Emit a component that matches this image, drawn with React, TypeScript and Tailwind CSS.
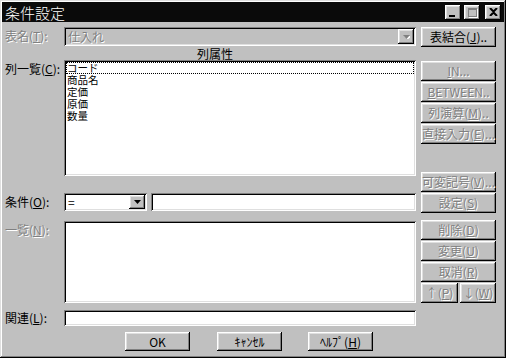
const raised =
  'shadow-[inset_-1px_-1px_0_#000,inset_1px_1px_0_#fff,inset_-2px_-2px_0_#808080,inset_2px_2px_0_#dfdfdf]'
const sunken =
  'shadow-[inset_1px_1px_0_#808080,inset_-1px_-1px_0_#fff,inset_2px_2px_0_#000,inset_-2px_-2px_0_#dfdfdf]'
const disabledText = 'text-[#808080] [text-shadow:1px_1px_0_#fff]'

function Btn(props: { label: React.ReactNode; disabled?: boolean; className?: string }) {
  const { label, disabled, className } = props
  return (
    <div
      className={`flex items-center justify-center bg-[#c0c0c0] ${raised} ${
        disabled ? disabledText : 'text-black'
      } ${className ?? 'h-[20px] w-[75px]'}`}
    >
      {label}
    </div>
  )
}

function Arrow({ disabled }: { disabled?: boolean }) {
  return (
    <div className={`flex h-full w-[16px] items-center justify-center bg-[#c0c0c0] ${raised}`}>
      <svg width="7" height="4" viewBox="0 0 7 4">
        {disabled && <path d="M1 1h7l-3.5 4z" fill="#fff" />}
        <path d="M0 0h7l-3.5 4z" fill={disabled ? '#808080' : '#000'} />
      </svg>
    </div>
  )
}

function Label(props: { children: React.ReactNode; disabled?: boolean }) {
  return (
    <div className={`w-[62px] shrink-0 pl-[3px] ${props.disabled ? disabledText : 'text-black'}`}>
      {props.children}
    </div>
  )
}

const columns = ['コード', '商品名', '定価', '原価', '数量']

export default function App() {
  return (
    <div className="flex h-[358px] w-[506px] flex-col bg-[#c0c0c0] p-[2px] font-['MS_UI_Gothic','Noto_Sans_CJK_JP',sans-serif] text-[12px] leading-none shadow-[inset_-1px_-1px_0_#000,inset_1px_1px_0_#dfdfdf,inset_-2px_-2px_0_#808080,inset_2px_2px_0_#fff]">
      {/* title bar */}
      <div className="flex h-[20px] shrink-0 items-center bg-[#0a0a0a] pl-[3px] pr-[3px]">
        <span className="text-[15px] font-light text-white">条件設定</span>
        <div className="ml-auto flex items-center">
          <div className={`flex h-[15px] w-[16px] items-end bg-[#c0c0c0] pb-[3px] pl-[4px] ${raised}`}>
            <div className="h-[2px] w-[6px] bg-black" />
          </div>
          <div className={`ml-[3px] flex h-[15px] w-[16px] items-center justify-center bg-[#c0c0c0] ${raised}`}>
            <div className="h-[9px] w-[9px] border border-t-2 border-[#808080] shadow-[1px_1px_0_#fff]" />
          </div>
          <div className={`ml-[5px] flex h-[15px] w-[16px] items-center justify-center bg-[#c0c0c0] ${raised}`}>
            <svg width="9" height="8" viewBox="0 0 9 8">
              <path d="M1 0l3.5 3.5L8 0M1 8l3.5-3.5L8 8" stroke="#000" strokeWidth="2" fill="none" />
            </svg>
          </div>
        </div>
      </div>

      <div className="flex pt-[5px]">
        {/* left + middle */}
        <div className="flex w-[414px] flex-col">
          <div className="flex h-[19px]">
            <Label disabled>
              <div className="pt-[3px]">
                表名(<u>T</u>):
              </div>
            </Label>
            <div className={`flex w-[352px] items-center bg-[#c0c0c0] p-[2px] ${sunken}`}>
              <span className={`ml-[2px] ${disabledText}`}>仕入れ</span>
              <div className="ml-auto h-full">
                <Arrow disabled />
              </div>
            </div>
          </div>
          <div className="flex h-[14px] items-end pl-[195px]">列属性</div>
          <div className="flex h-[116px]">
            <Label>
              <div className="pt-[3px]">
                列一覧(<u>C</u>):
              </div>
            </Label>
            <div className={`w-[352px] bg-white p-[2px] ${sunken}`}>
              {columns.map((c, i) => (
                <div
                  key={c}
                  className={`h-[12px] pl-[1px] text-[10.5px] leading-[12px] ${
                    i === 0 ? 'outline-1 -outline-offset-1 outline-dotted outline-black' : ''
                  }`}
                >
                  {c}
                </div>
              ))}
            </div>
          </div>
          <div className="mt-[17px] flex h-[18px] items-center">
            <Label>
              条件(<u>O</u>):
            </Label>
            <div className={`flex h-full w-[83px] items-center bg-white p-[2px] ${sunken}`}>
              <span className="ml-[2px]">=</span>
              <div className="ml-auto h-full">
                <Arrow />
              </div>
            </div>
            <div className={`ml-[4px] h-full w-[265px] bg-white ${sunken}`} />
          </div>
          <div className="mt-[10px] flex h-[82px]">
            <Label disabled>
              <div className="pt-[3px]">
                一覧(<u>N</u>):
              </div>
            </Label>
            <div className={`w-[352px] bg-white ${sunken}`} />
          </div>
          <div className="mt-[7px] flex h-[16px] items-center">
            <Label>
              関連(<u>L</u>):
            </Label>
            <div className={`h-full w-[352px] bg-white ${sunken}`} />
          </div>
        </div>

        {/* right buttons */}
        <div className="ml-[5px] flex w-[75px] flex-col">
          <Btn
            label={
              <>
                表結合(<u>J</u>)..
              </>
            }
          />
          <div className="mt-[14px] flex flex-col gap-[1px]">
            <Btn disabled label={<><u>I</u>N...</>} />
            <Btn disabled label={<><u>B</u>ETWEEN..</>} />
            <Btn disabled label={<>列演算(<u>M</u>)..</>} />
            <Btn disabled label={<>直接入力(<u>E</u>)...</>} />
          </div>
          <div className="mt-[28px] flex flex-col gap-[1px]">
            <Btn disabled label={<>可変記号(<u>V</u>)...</>} />
            <Btn disabled label={<>設定(<u>S</u>)</>} />
          </div>
          <div className="mt-[7px] flex flex-col gap-[1px]">
            <Btn disabled label={<>削除(<u>D</u>)</>} />
            <Btn disabled label={<>変更(<u>U</u>)</>} />
            <Btn disabled label={<>取消(<u>R</u>)</>} />
            <div className="flex gap-[2px]">
              <Btn disabled className="h-[20px] w-[37px]" label={<>↑(<u>P</u>)</>} />
              <Btn disabled className="h-[20px] w-[36px]" label={<>↓(<u>W</u>)</>} />
            </div>
          </div>
        </div>
      </div>

      {/* bottom buttons */}
      <div className="mt-[6px] flex pl-[123px]">
        <Btn className="h-[19px] w-[65px]" label="OK" />
        <Btn className="ml-[27px] h-[19px] w-[65px]" label="ｷｬﾝｾﾙ" />
        <Btn className="ml-[26px] h-[19px] w-[65px]" label={<>ﾍﾙﾌﾟ(<u>H</u>)</>} />
      </div>
    </div>
  )
}
